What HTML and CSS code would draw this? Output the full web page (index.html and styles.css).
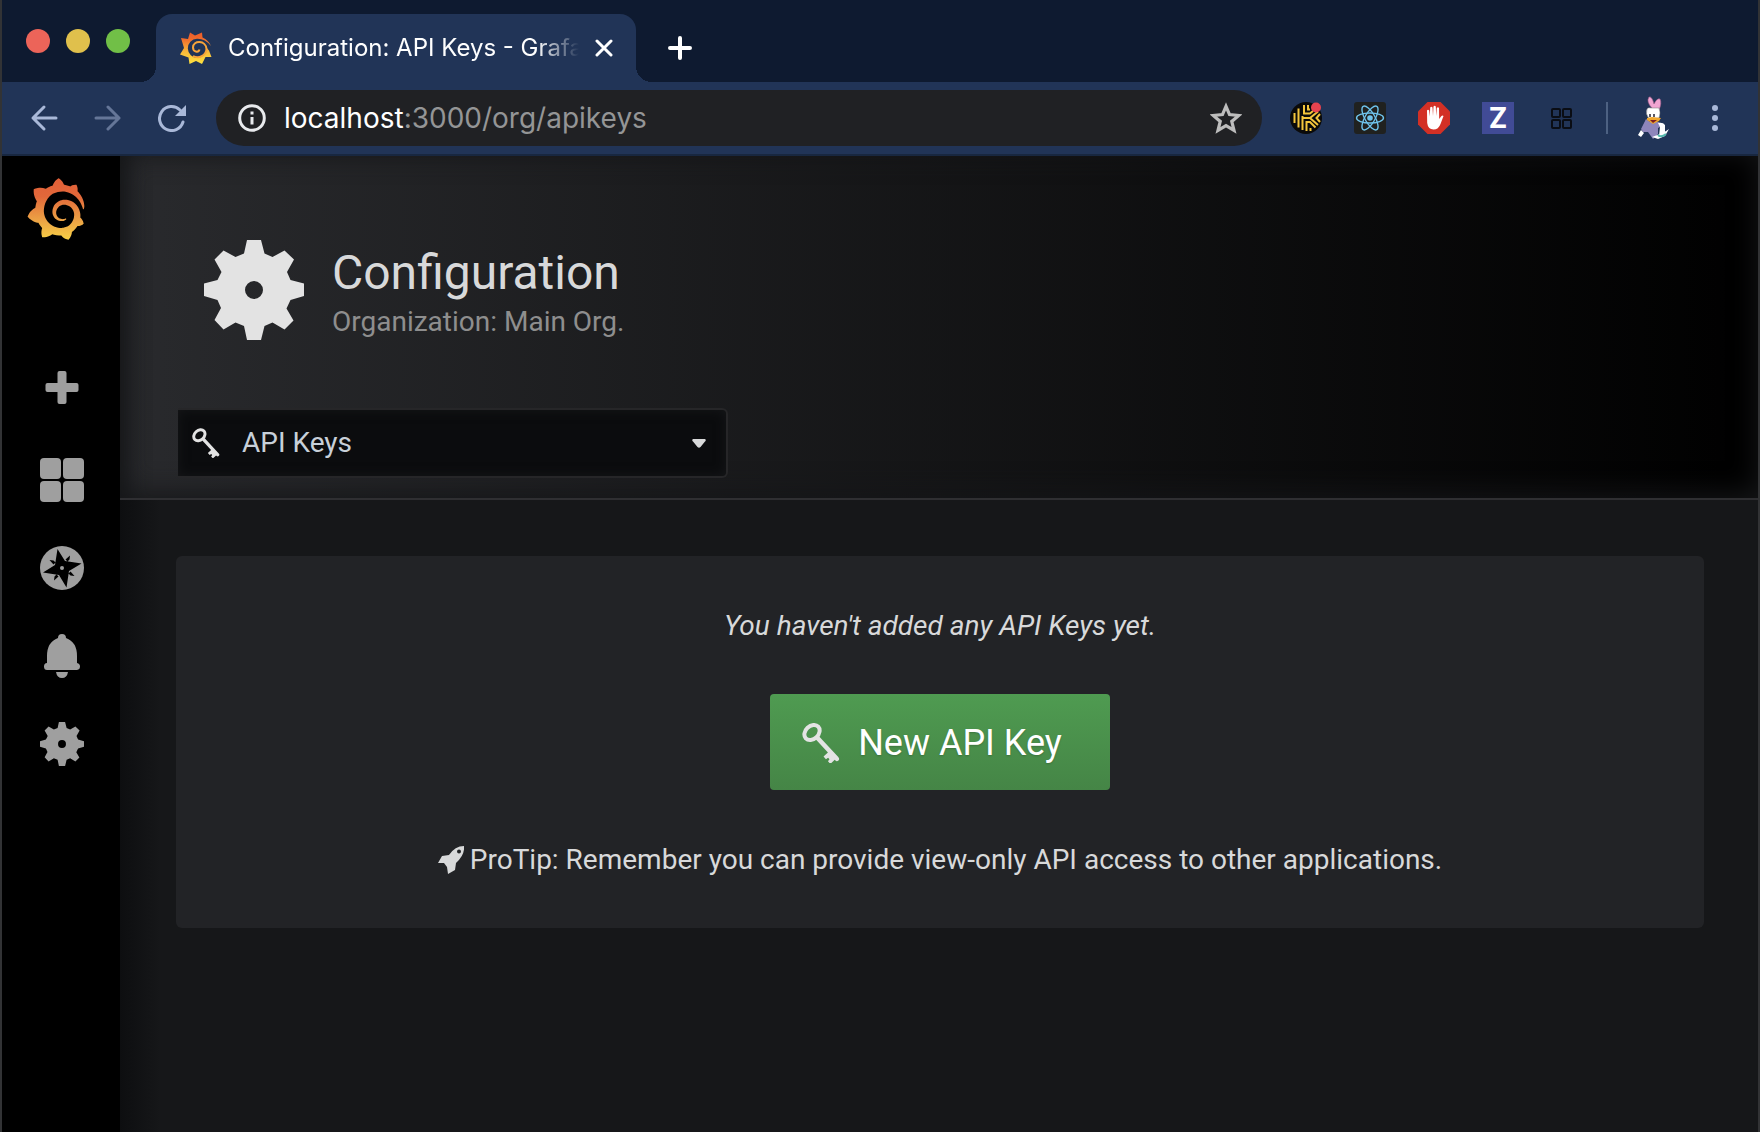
FILE: index.html
```html
<!DOCTYPE html>
<html lang="en">
<head>
<meta charset="utf-8">
<title>Configuration: API Keys - Grafana</title>
<link rel="stylesheet" href="styles.css">
</head>
<body>
<svg class="defs" aria-hidden="true">
  <defs>
    <linearGradient id="flame" x1="0" y1="1" x2="0" y2="0">
      <stop offset="0" stop-color="#f7d046"/><stop offset=".3" stop-color="#eda545"/><stop offset=".7" stop-color="#e2683a"/><stop offset="1" stop-color="#e05f38"/>
    </linearGradient>
    <linearGradient id="flame-tab" x1="0" y1="1" x2="0" y2="0">
      <stop offset="0" stop-color="#fde23f"/><stop offset=".4" stop-color="#f9b93a"/><stop offset=".8" stop-color="#ef6a2c"/><stop offset="1" stop-color="#ec5b2a"/>
    </linearGradient>
    <symbol id="gear" viewBox="0 0 100 100">
      <path fill-rule="evenodd" d="M43 0H57L60.500 13.500L68.500 17L80.500 10.500L90 19.500L83 32L86.500 40L100 43.500V56L86.500 60L82.500 68.500L89.500 80.500L80.500 89.500L68.500 82.500L60.500 86L57 100H43L40 86L31.500 82.500L19.500 89.500L10.500 80L17 68L13.500 60L0 56V43.500L13.500 40L17.500 32L10.500 19.500L19.500 10.500L31.500 17L40 13.500ZM50 41A9 9 0 1 0 50 59A9 9 0 1 0 50 41Z"/>
    </symbol>
    <symbol id="key" viewBox="0 1 38 40">
      <g transform="rotate(-43 10 10.500)">
        <ellipse cx="10" cy="10.500" rx="8.500" ry="6.500" fill="none" stroke="currentColor" stroke-width="4"/>
        <path d="M8 18H12.500V46Q12.500 49 10.300 49T8 47V46L2 46V42.500L4.500 42V40L2 39.500V36H8Z"/>
      </g>
    </symbol>
  </defs>
</svg>
<div class="window">
  <header class="tabstrip">
    <div class="lights"><i class="light red"></i><i class="light yellow"></i><i class="light green"></i></div>
    <div class="tab">
      <svg class="favicon" viewBox="0 0 32 32"><path fill="url(#flame-tab)" d="M10 .5L15 3.500L22 .5L22.500 5.500Q28.500 8 31 14Q25 6.500 17 6.800A9.500 9.500 0 1 0 26.800 16L29 18.500L31.500 25L25.500 25L22 32L16 29L9.500 32L8.500 25.500L0 22.500L4 16L1 6L8 7Z"/><path class="spiral" d="M26.500 17C26 8 13 8 13 15.500C13 20 18.500 21 19.500 17.500M26.500 17A9 9 0 0 1 13 24"/></svg>
      <span class="tab-title">Configuration: API Keys - Grafana</span>
      <button class="bare" aria-label="Close tab"><svg class="close" viewBox="0 0 18 18"><path d="M2 2L16 16M16 2L2 16"/></svg></button>
    </div>
    <button class="bare new-tab" aria-label="New tab"><svg viewBox="0 0 24 24"><path d="M12 2V22M2 12H22"/></svg></button>
  </header>
  <nav class="toolbar">
    <div class="history">
      <button class="bare" aria-label="Back"><svg viewBox="0 0 28 28"><path d="M26 14H3M14 3L3 14L14 25"/></svg></button>
      <button class="bare faded" aria-label="Forward"><svg viewBox="0 0 28 28"><path d="M2 14H25M14 3L25 14L14 25"/></svg></button>
      <button class="bare" aria-label="Reload"><svg viewBox="0 0 28 28"><path d="M25 18A12 12 0 1 1 22 6"/><path class="solid" d="M28 1V12H17Z"/></svg></button>
    </div>
    <div class="omnibox">
      <svg class="info" viewBox="0 0 28 28"><circle cx="14" cy="14" r="12.300"/><path d="M14 13V20.500M14 7.500V10.500"/></svg>
      <a class="url" href="#">localhost<span>:3000/org/apikeys</span></a>
      <button class="bare" aria-label="Bookmark"><svg class="star" viewBox="0 0 30 30"><path d="M15 4L18.300 11.800L27 12.600L20.400 18.200L22.500 26.600L15 22.100L7.500 26.600L9.600 18.200L3 12.600L11.700 11.800Z"/></svg></button>
    </div>
    <div class="extensions">
      <svg viewBox="0 0 32 32"><circle cx="16" cy="16" r="16" fill="#0a0a0a"/><g fill="none" stroke="#f3c53c" stroke-width="2"><path d="M4.500 11V21M8.500 6.500V25.500M12.500 14V28M14 3V11.500H20L23 9M18 3V7.500H20M12.500 16H20L28 9.500M20 16L28 23M16.500 29V20H20L25.500 25.500M20.500 29V26M30 12L26.500 16L30 20"/></g><circle cx="26" cy="5.500" r="5" fill="#e8434f"/></svg>
      <svg viewBox="0 0 32 32"><rect width="32" height="32" rx="3" fill="#20211f"/><g fill="none" stroke="#6fc4ec" stroke-width="1.400"><ellipse cx="16" cy="16" rx="13.500" ry="5"/><ellipse cx="16" cy="16" rx="13.500" ry="5" transform="rotate(60 16 16)"/><ellipse cx="16" cy="16" rx="13.500" ry="5" transform="rotate(120 16 16)"/></g><circle cx="16" cy="16" r="2.800" fill="#6fc4ec"/></svg>
      <svg viewBox="0 0 32 32"><path d="M9.500 0H22.500L32 9.500V22.500L22.500 32H9.500L0 22.500V9.500Z" fill="#d33025"/><path fill="#fff" d="M9 8.500Q10 7 11.200 8.500L11.800 14.500L12.200 5.500Q13.300 4 14.500 5.500L15 14L15.500 4.500Q16.700 3 17.800 4.500L18.200 14L18.800 6Q20 4.700 21 6L21.200 17L23 14.500Q24.500 13 25.500 14L22.500 22Q20.500 27.500 15.500 27.500Q10 27.500 9.200 21Z"/></svg>
      <span class="zed">Z</span>
      <svg viewBox="0 0 32 32"><g fill="none" stroke="#0a0d14" stroke-width="2"><rect x="6" y="7" width="8" height="8" rx="1"/><rect x="17" y="7" width="8" height="8" rx="1"/><rect x="6" y="18" width="8" height="8" rx="1"/><rect x="17" y="18" width="8" height="8" rx="1"/></g></svg>
    </div>
    <i class="divider"></i>
    <svg class="avatar" viewBox="0 0 32 44"><path fill="#f0a5d2" stroke="#a8608c" stroke-width=".6" d="M14 12Q8 6 11 1Q14 0 16 8Q19 2 22 3Q24 7 21 14L12 13Z"/><path fill="#fff" stroke="#777" stroke-width=".5" d="M9 13Q10 11 14 12L21 12Q23 17 21 22L11 23Q7 17 9 13Z"/><path fill="#8e85bb" d="M8 23L12 26L21 26L24 30L20 32L20 38L15 43L10 36L5 36L3 33Z"/><path fill="#fff" d="M3 34L6 37L3 41L0 39ZM20 27Q25 26 27 29V39L21 40L22 31ZM14 41L22 38L28 35L31 33L27 40L20 43Z"/><path fill="#efa62d" d="M9 22L14 21L23 22L21 25L15 28L9 24Z"/><path fill="#7c1f24" d="M12 24H19L15 27Z"/><path d="M12 18V21M16 18V21" stroke="#223" stroke-width="1.500"/><path d="M20 39Q23 42 28 38" stroke="#55b9ae" stroke-width="2" fill="none"/></svg>
    <button class="bare menu" aria-label="Menu"><i></i><i></i><i></i></button>
  </nav>
  <div class="app">
    <aside class="sidemenu">
      <a class="logo" href="#" aria-label="Home"><svg viewBox="8 0 335 365"><path fill="url(#flame)" d="M342,161.2c-0.6-6.1-1.6-13.1-3.6-20.9c-2-7.7-5-16.2-9.4-25c-4.4-8.8-10.1-17.9-17.5-26.8c-2.9-3.5-6.1-6.9-9.500-10.2c5.1-20.3-6.2-37.9-6.2-37.9c-19.500-1.2-31.9,6.1-36.500,9.4c-0.8-0.3-1.500-0.7-2.3-1c-3.3-1.3-6.7-2.6-10.3-3.7c-3.500-1.1-7.1-2.1-10.8-3c-3.7-0.9-7.4-1.6-11.2-2.2c-0.7-0.1-1.3-0.2-2-0.3c-8.500-27.2-32.9-38.6-32.9-38.6c-27.3,17.3-32.4,41.500-32.4,41.500s-0.1,0.500-0.3,1.4c-1.500,0.4-3,0.9-4.500,1.3c-2.1,0.6-4.2,1.4-6.2,2.2c-2.1,0.8-4.1,1.6-6.2,2.500c-4.1,1.8-8.2,3.8-12.2,6c-3.9,2.2-7.7,4.6-11.4,7.1c-0.500-0.2-1-0.4-1-0.4c-37.8-14.4-71.3,2.9-71.3,2.9c-3.1,40.2,15.1,65.500,18.7,70.1c-0.9,2.500-1.7,5-2.500,7.500c-2.8,9.1-4.9,18.4-6.2,28.1c-0.2,1.4-0.4,2.8-0.500,4.2C18.8,192.7,8.500,228,8.500,228c29.1,33.500,63.1,35.6,63.1,35.6c0,0,0.1-0.1,0.1-0.1c4.3,7.7,9.3,15,14.9,21.9c2.4,2.9,4.8,5.6,7.4,8.3c-10.6,30.4,1.500,55.6,1.500,55.6c32.4,1.2,53.7-14.2,58.2-17.7c3.2,1.1,6.500,2.1,9.8,2.9c10,2.6,20.2,4.1,30.4,4.500c2.500,0.1,5.1,0.2,7.6,0.1l1.2,0l0.8,0l1.6,0l1.6-0.1l0,0.1c15.3,21.8,42.1,24.9,42.1,24.9c19.1-20.1,20.2-40.1,20.2-44.4l0,0c0,0,0-0.1,0-0.3c0-0.4,0-0.6,0-0.6l0,0c0-0.3,0-0.6,0-0.9c4-2.8,7.8-5.8,11.4-9.1c7.6-6.9,14.3-14.8,19.9-23.3c0.500-0.8,1-1.6,1.500-2.4c21.6,1.2,36.9-13.4,36.9-13.4c-3.6-22.500-16.4-33.500-19.1-35.6l-1-0.8c0.1-1.4,0.2-2.7,0.3-4.1c0.2-2.4,0.2-4.9,0.2-7.3l0-3.800l-0.2-3.500c-0.1-2-0.3-4-0.6-5.700l-0.300-1.900c-0.4-2.500-0.8-4.9-1.4-7.4c-2.3-9.7-6.1-18.9-11-27.2c-5-8.3-11.2-15.6-18.3-21.8c-7-6.2-14.9-11.2-23.1-14.9c-8.3-3.7-16.9-6.1-25.500-7.2c-4.3-0.6-8.6-0.8-12.9-0.7l-3.200,0l-3.300,0.2c-2.2,0.2-4.4,0.500-6.500,0.9c-8.6,1.6-16.7,4.7-23.8,9c-7.1,4.3-13.3,9.6-18.3,15.6c-5,6-8.9,12.7-11.6,19.6c-2.7,6.9-4.2,14.1-4.6,21c-0.1,1.7-0.1,3.500-0.1,5.2c0,0.4,0,0.9,0,1.3l0.1,1.4c0.1,0.8,0.1,1.7,0.2,2.500c0.3,3.500,1,6.9,1.9,10.1c1.9,6.500,4.9,12.4,8.6,17.4c3.7,5,8.2,9.1,12.9,12.4c4.7,3.2,9.8,5.500,14.8,7c5,1.500,10,2.1,14.7,2.1c3,0,6-0.200,8.800-0.800c2.500-0.400,4.500-1,6.400-1.600c2-0.7,4-1.500,5.7-2.4c1.8-0.9,3.4-2,5-3c0.4-0.3,0.9-0.6,1.3-1c1.6-1.3,1.9-3.7,0.6-5.3c-1.1-1.4-3.1-1.8-4.7-0.9c-0.4,0.2-0.8,0.4-1.2,0.6c-1.4,0.7-2.8,1.3-4.3,1.8c-1.500,0.500-3.1,0.9-4.7,1.2c-3,0.500-7,0.600-10.500,0c-3.7-0.500-7.4-1.6-10.9-3.2c-3.6-1.6-7-3.8-10.1-6.6c-3.1-2.8-5.8-6.1-7.9-9.9c-2.1-3.8-3.6-8-4.3-12.4c-0.3-2.2-0.500-4.500-0.4-6.7c0.100-2.500,0.300-4.800,0.700-7.100c1.7-9.6,6.500-19,13.9-26.1c1.9-1.8,3.9-3.4,6-4.9c2.1-1.500,4.4-2.8,6.8-3.9c2.4-1.1,4.8-2,7.4-2.7c2.500-0.7,5.1-1.1,7.8-1.4c3-0.300,5.500-0.200,8.200-0.100c2.9,0.2,5.7,0.6,8.500,1.3c5.6,1.2,11.1,3.3,16.2,6.1c10.2,5.7,18.9,14.500,24.2,25.1c2.7,5.3,4.6,11,5.500,16.9c0.400,3,0.700,6,0.700,8.900c0,3-0.100,5-0.200,6.900c-0.1,1.6-0.3,3.3-0.500,4.9c-0.2,1.6-0.500,3.2-0.8,4.8c-0.3,1.6-0.7,3.2-1.1,4.7c-0.8,3.1-1.8,6.2-3,9.3c-2.4,6-5.6,11.8-9.4,17.1c-7.7,10.6-18.2,19.2-30.2,24.7c-6,2.7-12.3,4.7-18.8,5.7c-3.2,0.6-6.500,0.9-9.8,1c-3.500,0-7,0-10.200-0.300c-7-0.500-13.9-1.8-20.7-3.7c-6.7-1.9-13.2-4.6-19.4-7.8c-12.3-6.6-23.4-15.6-32-26.500c-4.3-5.4-8.1-11.3-11.2-17.4c-3.1-6.1-5.6-12.6-7.4-19.1c-1.8-6.6-2.9-13.3-3.4-20.1c-0.200-3-0.200-7-0.100-10.200c0.1-3.3,0.4-6.8,0.8-10.2c0.4-3.4,1-6.9,1.7-10.3c0.7-3.4,1.500-6.8,2.500-10.2c1.9-6.7,4.3-13.2,7.1-19.3c5.7-12.2,13.1-23.1,22-31.8c2.2-2.2,4.500-4.2,6.9-6.2c2.4-1.9,4.9-3.7,7.500-5.4c2.500-1.7,5.2-3.2,7.9-4.6c8-4,17-7,26-9c9-1.800,18-2.900,28-3c5.8,0.2,11.500,0.9,17,1.9c11.1,2.1,21.500,5.6,31,10.3c9.500,4.6,17.9,10.3,25.3,16.500c5,4.400,9.500,8.500,13.500,13c3.1,3.3,6,6.6,8.6,10c5.2,6.7,9.4,13.500,12.7,19.9c3,6,6,13,8,19.500c1.500,4.4,2.6,8.3,3.500,11.7c0.3,1.4,1.6,2.3,3,2.1c1.500-0.1,2.6-1.3,2.6-2.8C342.6,170.4,342.500,166.1,342,161.2z"/></svg></a>
      <a href="#" aria-label="Create"><svg viewBox="0 0 44 44"><rect x="17.500" y="1" width="9" height="33" rx="2"/><rect x="5.500" y="13" width="33" height="9" rx="2"/></svg></a>
      <a href="#" aria-label="Dashboards"><svg viewBox="0 0 44 44"><rect width="21" height="21" rx="4"/><rect x="23" width="21" height="21" rx="4"/><rect y="23" width="21" height="21" rx="4"/><rect x="23" y="23" width="21" height="21" rx="4"/></svg></a>
      <a href="#" aria-label="Explore"><svg viewBox="0 0 44 44"><circle cx="22" cy="22" r="22"/><path fill="#000" d="M17.500 3L25 15L41.500 17.500L29 25L26.500 41.500L19 29L3 26.500L15 19ZM30 9.500L29.500 13.500L27.500 15.500L25.500 13.500ZM9.500 14L13.500 14.500L15.500 16.500L13.500 18.500ZM34.500 30L30.500 29.500L28.500 27.500L30.500 25.500ZM14 34.500L14.500 30.500L16.500 28.500L18.500 30.500Z"/><circle cx="22" cy="22" r="2"/></svg></a>
      <a href="#" aria-label="Alerting"><svg viewBox="0 0 44 44"><path d="M18 4Q18 0 22 0T26 4Q37 8 37 22V29Q40 29.500 40 32.500T37 36H7Q4 36 4 32.500T7 29V22Q7 8 18 4ZM16 38H28Q27 44 22 44T16 38Z"/></svg></a>
      <a href="#" aria-label="Configuration"><svg><use href="#gear"/></svg></a>
    </aside>
    <main class="main">
      <section class="page-header">
        <div class="heading">
          <svg class="heading-icon"><use href="#gear"/></svg>
          <div><h1>Configuration</h1><p class="subtitle">Organization: Main Org.</p></div>
        </div>
        <div class="picker">
          <svg class="picker-key"><use href="#key"/></svg>
          <select aria-label="Configuration section"><option>API Keys</option></select>
          <svg class="caret" viewBox="0 0 14 9"><path d="M1 0H13Q14.500 1 13 2.500L8.500 8Q7 9.500 5.500 8L1 2.500Q-.5 1 1 0Z"/></svg>
        </div>
      </section>
      <section class="card">
        <p class="empty">You haven't added any API Keys yet.</p>
        <button class="cta"><svg><use href="#key"/></svg>New API Key</button>
        <p class="tip"><svg viewBox="0 0 26 28"><path fill-rule="evenodd" d="M26 0Q27 9 18 17L17 24L10 28L9 21L6 17L0 17L4 10L11 9Q17 0 26 0ZM21 3.500A2 2 0 1 0 21 7.500A2 2 0 1 0 21 3.500Z"/></svg>ProTip: Remember you can provide view-only API access to other applications.</p>
      </section>
    </main>
  </div>
</div>
</body>
</html>
```
FILE: styles.css
```css
* { box-sizing: border-box; }
body { margin: 0; background: #161719; color: #d8d9da; font-family: Roboto, "Liberation Sans", sans-serif; font-size: 28px; line-height: 40px; }
p, h1 { margin: 0; font-weight: 400; }
svg { display: block; flex: none; }
.defs { position: absolute; width: 0; height: 0; }
.bare { display: flex; padding: 0; border: 0; background: none; color: inherit; }
.window { display: flex; flex-direction: column; min-height: 100vh; border: solid #323335; border-width: 0 2px; }

.tabstrip { display: flex; align-items: flex-end; height: 82px; background: #0e1a30; color: #fff; }
.lights { display: flex; gap: 16px; align-self: center; width: 154px; padding-left: 24px; }
.light { width: 24px; height: 24px; border-radius: 50%; }
.red { background: #ec6459; }
.yellow { background: #e0c04c; }
.green { background: #71bf47; }
.tab { position: relative; display: flex; align-items: center; gap: 16px; width: 480px; height: 68px; padding: 0 23px 0 24px; border-radius: 16px 16px 0 0; background: #213457; }
.tab::before, .tab::after { content: ""; position: absolute; bottom: 0; width: 16px; height: 16px; }
.tab::before { right: 100%; background: radial-gradient(circle at 0 0, transparent 16px, #213457 16px); }
.tab::after { left: 100%; background: radial-gradient(circle at 100% 0, transparent 16px, #213457 16px); }
.favicon { width: 32px; height: 32px; }
.spiral { fill: none; stroke: #f9a53a; stroke-width: 2; }
.tab-title { flex: 1; overflow: hidden; white-space: nowrap; font: 24px/32px Inter, sans-serif; -webkit-mask-image: linear-gradient(to right, #000 88%, transparent); mask-image: linear-gradient(to right, #000 88%, transparent); }
.close { width: 18px; height: 18px; }
.close, .new-tab svg { fill: none; stroke: #fff; stroke-width: 3; stroke-linecap: round; }
.new-tab { align-self: center; margin: 14px 0 0 32px; }
.new-tab svg { width: 24px; height: 24px; stroke-width: 4; }

.toolbar { display: flex; align-items: center; height: 74px; padding: 0 40px 0 28px; border-bottom: 2px solid #182740; background: #213457; color: #a9b8d8; }
.history { display: flex; gap: 36px; width: 186px; }
.history svg { width: 28px; height: 28px; fill: none; stroke: currentColor; stroke-width: 3; stroke-linecap: round; stroke-linejoin: round; }
.history .solid { fill: currentColor; stroke: none; }
.faded { opacity: .5; }
.omnibox { display: flex; flex: 1; align-items: center; gap: 18px; height: 56px; padding: 0 20px 0 22px; border-radius: 28px; background: #202124; }
.info { width: 28px; height: 28px; fill: none; stroke: #e8eaed; stroke-width: 3; }
.url { flex: 1; color: #fff; font: 28px/36px Inter, sans-serif; text-decoration: none; }
.url span { color: #949596; }
.star { width: 32px; height: 32px; fill: none; stroke: #bdbdbd; stroke-width: 3; }
.extensions { display: flex; gap: 32px; margin-left: 28px; }
.extensions svg { width: 32px; height: 32px; }
.zed { width: 32px; height: 32px; background: #414b96; color: #fff; font: 700 28px/32px Inter, sans-serif; text-align: center; }
.divider { width: 2px; height: 32px; margin: 0 30px 0 28px; background: #4d6182; }
.avatar { width: 32px; height: 44px; }
.menu { flex-direction: column; gap: 4px; margin-left: 42px; }
.menu i { width: 6px; height: 6px; border-radius: 50%; background: #a9b8d8; }

.app { display: flex; flex: 1; }
.sidemenu { display: flex; flex-direction: column; align-items: center; gap: 44px; width: 118px; padding-left: 2px; background: #000; }
.sidemenu svg { width: 44px; height: 44px; fill: #9f9f9f; }
.sidemenu .logo { align-self: flex-start; margin: 22px 0 86px 22px; }
.sidemenu .logo svg { width: 60px; height: 62px; }
.main { flex: 1; padding-bottom: 40px; background: linear-gradient(to right, #0d0e10, #161719 40px); }
.page-header { height: 344px; padding: 84px 58px 0; border-bottom: 2px solid #2f2f32; background: linear-gradient(90deg, #292a2d, #000); box-shadow: inset 0 -4px 28px #161719, inset 24px 0 24px -20px #161719; }
.heading { display: flex; gap: 28px; padding-left: 26px; }
.heading-icon { width: 100px; height: 100px; fill: #e3e3e3; }
h1 { padding-top: 2px; font-size: 48px; line-height: 62px; }
.subtitle { line-height: 36px; color: #8e8e8e; }
.picker { display: flex; align-items: center; gap: 22px; width: 550px; height: 70px; margin-top: 68px; padding: 0 20px 0 14px; border: 2px solid #262628; border-left: 0; border-radius: 0 6px 6px 0; background: #0b0c0e; box-shadow: inset 0 0 12px #161719; }
.picker-key { width: 28px; height: 30px; color: #e3e3e3; fill: currentColor; }
select { flex: 1; padding: 0; border: 0; appearance: none; background: none; color: #c7d0d9; font: inherit; }
.caret { width: 14px; height: 9px; fill: #d8d9da; }

.card { display: flex; flex-direction: column; align-items: center; margin: 56px 54px 0 56px; padding: 50px 48px 48px; border-radius: 6px; background: #222326; }
.empty { font-style: italic; }
.cta { display: flex; align-items: center; gap: 18px; height: 96px; margin: 48px 0 50px; padding: 2px 48px 0 32px; border: 0; border-radius: 4px; background: linear-gradient(#4f9b51, #458546); color: #fff; font: 36px/48px Roboto, sans-serif; text-shadow: 0 1px 2px rgba(0, 0, 0, .2); }
.cta svg { width: 38px; height: 40px; color: #e3e3e3; fill: currentColor; }
.tip { display: flex; align-items: center; gap: 6px; }
.tip svg { width: 26px; height: 28px; fill: #d8d9da; }
```
